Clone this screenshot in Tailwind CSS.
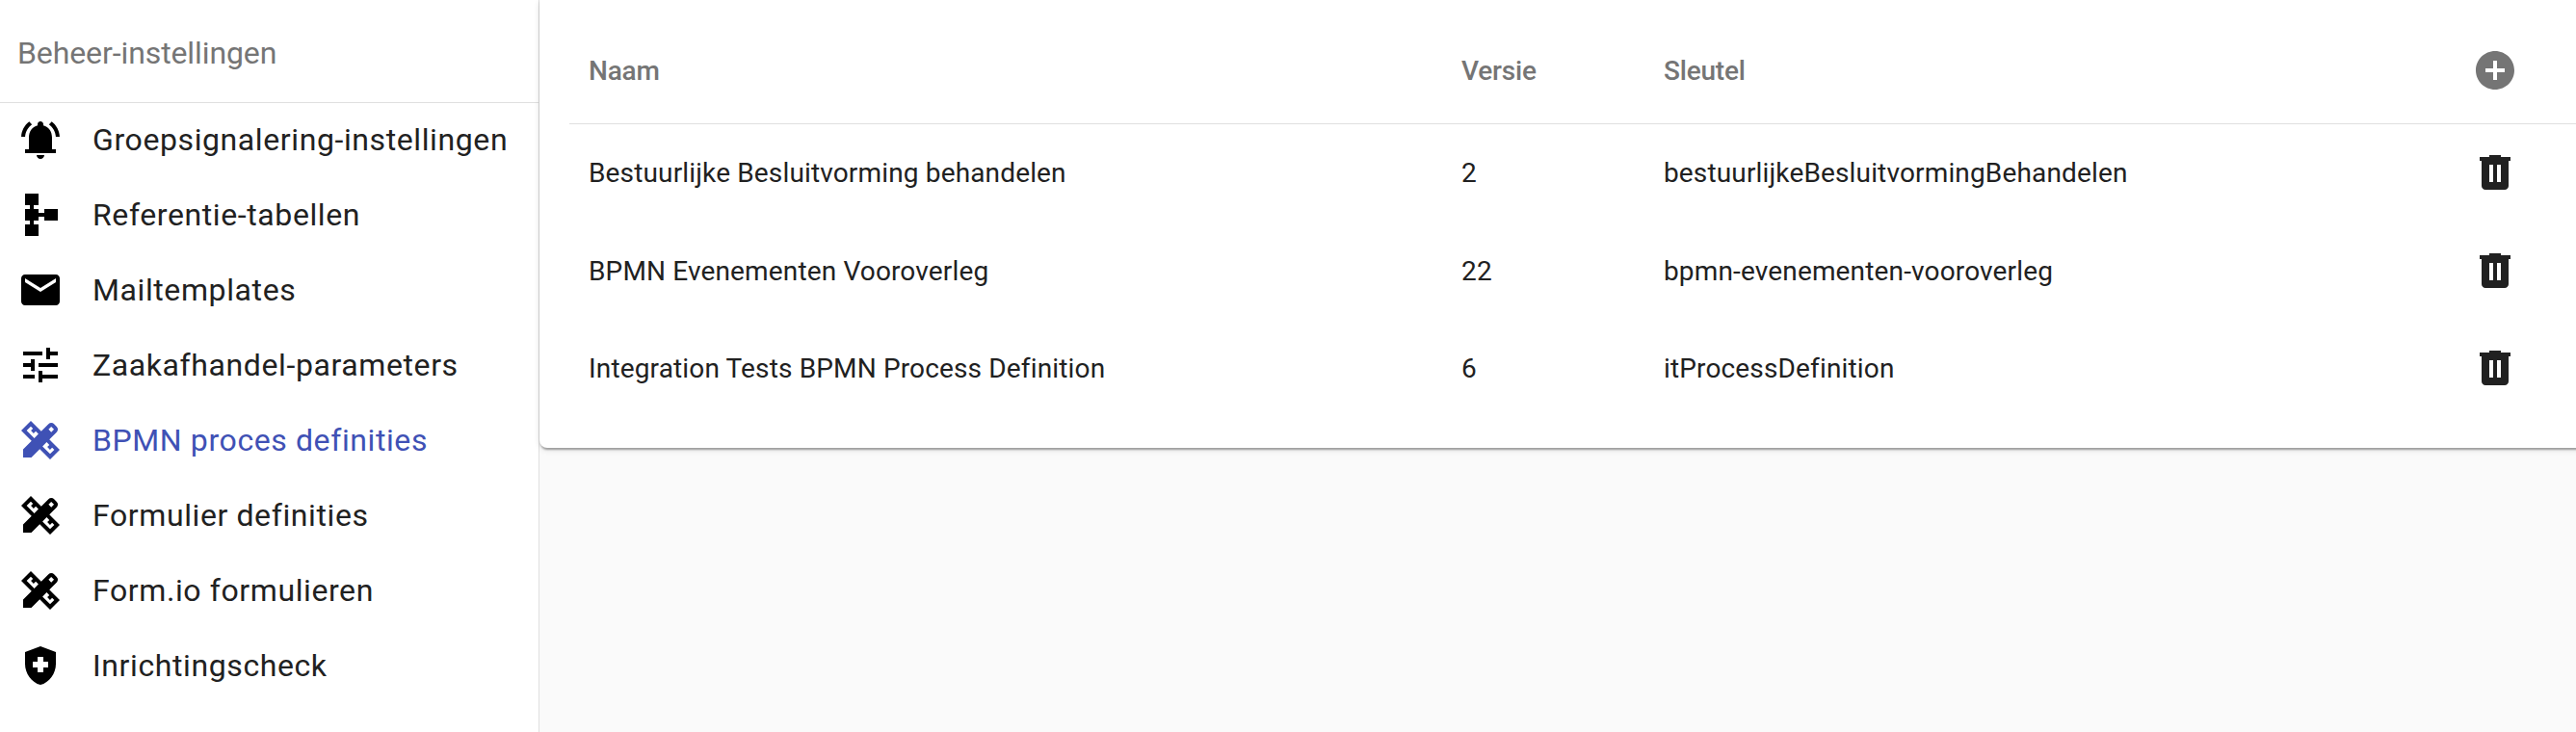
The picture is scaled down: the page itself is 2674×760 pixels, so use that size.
<!DOCTYPE html>
<html lang="nl">
<head>
<meta charset="utf-8">
<title>Beheer-instellingen</title>
<script src="https://cdn.jsdelivr.net/npm/@tailwindcss/browser@4"></script>
</head>
<body class="flex h-[760px] w-[2674px] overflow-hidden bg-[#fafafa] font-['Roboto',sans-serif] text-[#212121]">
<svg class="hidden">
  <symbol id="bell" viewBox="0 0 24 24"><path d="M7.58 4.08L6.15 2.65C3.75 4.48 2.17 7.3 2.03 10.5h2c.15-2.65 1.51-4.97 3.55-6.42zm12.39 6.42h2c-.15-3.2-1.73-6.02-4.12-7.85l-1.42 1.43c2.02 1.45 3.39 3.77 3.54 6.42zM18 11c0-3.07-1.64-5.64-4.5-6.32V4c0-.83-.67-1.5-1.5-1.5s-1.5.67-1.5 1.5v.68C7.63 5.36 6 7.92 6 11v6H4v2h16v-2h-2v-6zm-6 11c1.1 0 2-.9 2-2h-4c0 1.1.9 2 2 2z"/></symbol>
  <symbol id="schema" viewBox="0 0 24 24"><path d="M14 9v2h-3V9H8.5V7H11V1H4v6h2.5v2H4v6h2.5v2H4v6h7v-6H8.5v-2H11v-2h3v2h7V9h-7z"/></symbol>
  <symbol id="mail" viewBox="0 0 24 24"><path d="M20 4H4c-1.1 0-2 .9-2 2v12c0 1.1.9 2 2 2h16c1.1 0 2-.9 2-2V6c0-1.100-.9-2-2-2zm0 4l-8 5-8-5V6l8 5 8-5v2z"/></symbol>
  <symbol id="tune" viewBox="0 0 24 24"><path d="M3 17v2h6v-2H3zM3 5v2h10V5H3zm10 16v-2h8v-2h-8v-2h-2v6h2zM7 9v2H3v2h4v2h2V9H7zm14 4v-2H11v2h10zm-6-4h2V7h4V5h-4V3h-2v6z"/></symbol>
  <symbol id="design" viewBox="0 -960 960 960"><path fill-rule="evenodd" d="m352-522 86-87-56-57-44 44-56-56 43-44-45-45-87 87 159 158Zm328 329 87-87-45-45-44 43-56-56 43-44-57-56-86 86 158 159ZM290-120H120v-170l175-175L80-680l200-200 216 216 151-152q12-12 27-18t31-6q16 0 31 6t27 18l53 54q12 12 18 27t6 31q0 16-6 30.500T816-647L665-495l215 215L680-80 465-295 290-120ZM704-760l-56 56 56 57 57-57Z"/></symbol>
  <symbol id="shield" viewBox="0 0 24 24"><path d="M12 2 4 5v6.090c0 5.050 3.410 9.760 8 10.910 4.590-1.150 8-5.860 8-10.910V5zm1.500 11v2.500h-3V13H8v-3h2.500V7.500h3V10H16v3z"/></symbol>
  <symbol id="trash" viewBox="0 -960 960 960"><path d="M280-120q-33 0-56.500-23.500T200-200v-520h-40v-80h200v-40h240v40h200v80h-40v520q0 33-23.500 56.500T680-120H280Zm80-160h80v-360h-80v360Zm160 0h80v-360h-80v360Z"/></symbol>
  <symbol id="add" viewBox="0 0 24 24"><path d="M12 2C6.480 2 2 6.480 2 12s4.480 10 10 10 10-4.480 10-10S17.520 2 12 2zm5 11h-4v4h-2v-4H7v-2h4V7h2v4h4z"/></symbol>
</svg>

<aside class="h-full w-[560px] shrink-0 border-r border-[#e0e0e0] bg-white">
  <h2 class="flex h-[107px] items-center border-b border-[#e0e0e0] pt-1 pl-[18px] text-[32px] tracking-[-0.1px] text-[#757575]">Beheer-instellingen</h2>
  <nav class="-mt-px flex flex-col text-[32px] tracking-[0.6px]">
    <a class="flex h-[78px] items-center gap-[30px] pl-[18px]"><svg class="size-12 fill-black"><use href="#bell"/></svg><span>Groepsignalering-instellingen</span></a>
    <a class="flex h-[78px] items-center gap-[30px] pl-[18px]"><svg class="size-12 fill-black"><use href="#schema"/></svg><span>Referentie-tabellen</span></a>
    <a class="flex h-[78px] items-center gap-[30px] pl-[18px]"><svg class="size-12 fill-black"><use href="#mail"/></svg><span>Mailtemplates</span></a>
    <a class="flex h-[78px] items-center gap-[30px] pl-[18px]"><svg class="size-12 fill-black"><use href="#tune"/></svg><span>Zaakafhandel-parameters</span></a>
    <a class="flex h-[78px] items-center gap-[30px] pl-[18px] text-[#3f51b5]"><svg class="size-12 fill-current"><use href="#design"/></svg><span>BPMN proces definities</span></a>
    <a class="flex h-[78px] items-center gap-[30px] pl-[18px]"><svg class="size-12 fill-black"><use href="#design"/></svg><span>Formulier definities</span></a>
    <a class="flex h-[78px] items-center gap-[30px] pl-[18px]"><svg class="size-12 fill-black"><use href="#design"/></svg><span>Form.io formulieren</span></a>
    <a class="flex h-[78px] items-center gap-[30px] pl-[18px]"><svg class="size-12 fill-black"><use href="#shield"/></svg><span>Inrichtingscheck</span></a>
  </nav>
</aside>

<main class="min-w-0 grow">
  <section class="h-[465px] w-[2140px] rounded-bl-lg bg-white pt-[17px] pl-[31px] shadow-[0_4px_2px_-2px_rgba(0,0,0,0.2),0_2px_2px_0_rgba(0,0,0,0.14),0_2px_6px_0_rgba(0,0,0,0.12)]">
    <div class="grid h-[112px] grid-cols-[906px_210px_839px_1fr] items-center border-b border-[#e0e0e0] pl-5 text-[28px] tracking-[-0.2px] font-medium text-[#757575]">
      <span class="pt-0.5">Naam</span><span class="pt-0.5">Versie</span><span class="pt-0.5">Sleutel</span><svg class="size-12 fill-current"><use href="#add"/></svg>
    </div>
    <div class="grid h-[101.5px] grid-cols-[906px_210px_839px_1fr] items-center pl-5 text-[28px] tracking-[0.15px]">
      <span>Bestuurlijke Besluitvorming behandelen</span><span>2</span><span>bestuurlijkeBesluitvormingBehandelen</span><svg class="mb-0.5 size-12 fill-current"><use href="#trash"/></svg>
    </div>
    <div class="grid h-[101.5px] grid-cols-[906px_210px_839px_1fr] items-center pl-5 text-[28px] tracking-[0.15px]">
      <span class="pt-0.5">BPMN Evenementen Vooroverleg</span><span class="pt-0.5">22</span><span class="pt-0.5">bpmn-evenementen-vooroverleg</span><svg class="mb-px size-12 fill-current"><use href="#trash"/></svg>
    </div>
    <div class="grid h-[101.5px] grid-cols-[906px_210px_839px_1fr] items-center pl-5 text-[28px] tracking-[0.15px]">
      <span>Integration Tests BPMN Process Definition</span><span>6</span><span>itProcessDefinition</span><svg class="mb-0.5 size-12 fill-current"><use href="#trash"/></svg>
    </div>
  </section>
</main>
</body>
</html>
